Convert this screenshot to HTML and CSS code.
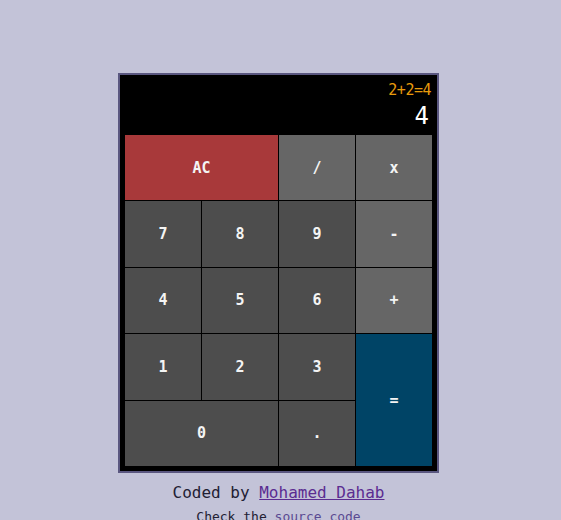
FILE: index.html
```html
<!DOCTYPE html>
<html>
<head>
<meta charset="utf-8">
<link rel="stylesheet" href="styles.css">
</head>
<body>
<main class="page">
  <div class="calc">
    <div class="display">
      <div class="prev">2+2=4</div>
      <div class="cur">4</div>
    </div>
    <div class="keys">
      <button class="key clear span2">AC</button>
      <button class="key op">/</button>
      <button class="key op">x</button>
      <button class="key">7</button>
      <button class="key">8</button>
      <button class="key">9</button>
      <button class="key op">-</button>
      <button class="key">4</button>
      <button class="key">5</button>
      <button class="key">6</button>
      <button class="key op">+</button>
      <button class="key">1</button>
      <button class="key">2</button>
      <button class="key">3</button>
      <button class="key equals">=</button>
      <button class="key span2">0</button>
      <button class="key">.</button>
    </div>
  </div>
  <p class="credit">Coded by <a href="#">Mohamed Dahab</a></p>
  <p class="source">Check the <a href="#">source code</a></p>
</main>
</body>
</html>
```
FILE: styles.css
```css
html, body {
  margin: 0;
  padding: 0;
  background: #c3c3d8;
  font-family: "DejaVu Sans Mono", "Liberation Mono", monospace;
}
.page {
  display: flex;
  flex-direction: column;
  align-items: center;
  padding: 73px 4px 0 0;
}
.calc {
  border: 2px solid #5a5780;
  background: #000;
  padding: 0 5px 5px 5px;
  box-sizing: content-box;
  width: 307px;
}
.display {
  height: 60px;
  display: flex;
  flex-direction: column;
  align-items: flex-end;
  padding-right: 1px;
  box-sizing: border-box;
}
.prev {
  color: #e89b0c;
  font-size: 15px;
  line-height: 18px;
  margin-top: 6px;
  letter-spacing: -0.5px;
}
.cur {
  color: #fff;
  font-size: 24px;
  line-height: 28px;
  margin-top: 3px;
  padding-right: 2px;
}
.keys {
  display: grid;
  grid-template-columns: repeat(4, 1fr);
  grid-template-rows: repeat(5, 1fr);
  gap: 1px;
  height: 331px;
}
.key {
  border: none;
  margin: 0;
  background: #4d4d4d;
  color: #f4f4f4;
  font-family: "DejaVu Sans Mono", "Liberation Mono", monospace;
  font-size: 15px;
  font-weight: bold;
  padding: 0;
}
.op { background: #666666; }
.clear { background: #a8393a; }
.equals { background: #004466; grid-row: span 2; }
.span2 { grid-column: span 2; }
.credit {
  margin: 10px 0 0 0;
  font-size: 16px;
  line-height: 20px;
  color: #222033;
}
.credit a { color: #5b2c91; }
.source {
  margin: 6px 0 0 0;
  font-size: 13px;
  line-height: 16px;
  color: #222033;
}
.source a { color: #5a4a92; text-decoration: none; }
```
